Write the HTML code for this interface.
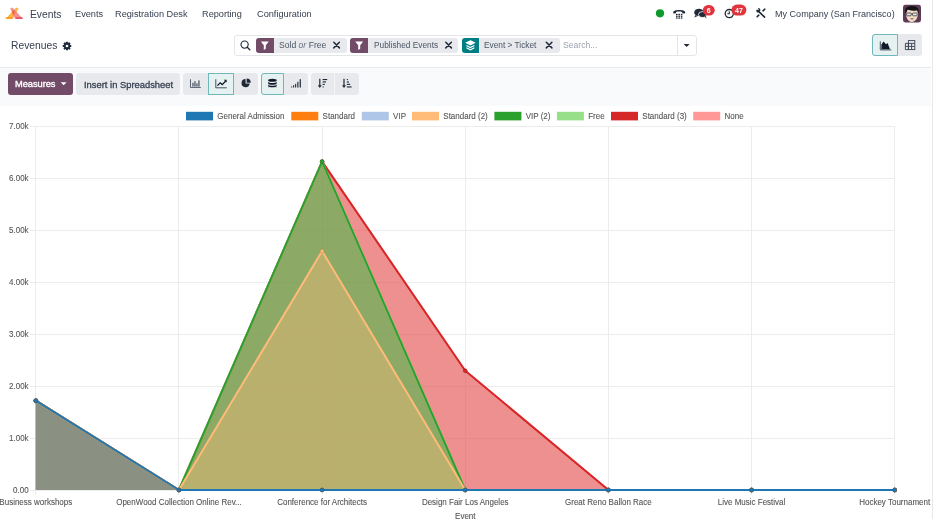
<!DOCTYPE html>
<html><head><meta charset="utf-8">
<style>
*{box-sizing:border-box;margin:0;padding:0}
html,body{width:933px;height:519px;overflow:hidden;background:#fff;font-family:"Liberation Sans",sans-serif;color:#374151}
.abs{position:absolute;will-change:transform}
.nav{font-size:9.2px;color:#374151;white-space:nowrap}
.band{position:absolute;left:0;top:66.7px;width:931px;height:39px;background:#f9fafb;border-top:1.2px solid #e9ebef}
.vline{position:absolute;left:932px;top:0;width:1px;height:519px;background:#e8e8e8}
.btn{position:absolute;border-radius:3px;background:#e7e9ed}
.act{background:#e6f1f2;border:1px solid #6fb7ba}
.facet{position:absolute;top:37.7px;height:14.8px;background:#e7e9ed;border-radius:3px;font-size:8.5px;white-space:nowrap}
.facet .ic{position:absolute;left:0;top:0;width:18px;height:14.8px;background:#714b67;border-radius:3px 0 0 3px}
.facet .tx{position:absolute;top:2.6px;color:#4b5563}
.facet .x{position:absolute;top:0}
</style></head><body>
<!-- NAVBAR -->
<svg class="abs" style="left:0;top:0" width="933" height="28" viewBox="0 0 933 28">
  <!-- logo -->
  <g>
    <polygon points="16.2,7.6 18.6,8.6 12.6,18.8 5.6,18.8" fill="#fbb03b" opacity="0.95"/>
    <polygon points="10.2,8.4 12.4,7.6 22.9,18.8 15.0,18.8" fill="#f47c7c" opacity="0.85"/>
    <polygon points="11.9,11.6 14.6,10.6 13.7,15.2" fill="#f15a24" opacity="0.9"/>
    <rect x="5.8" y="17.4" width="7" height="1.4" fill="#f7931e"/>
    <rect x="15.6" y="17.4" width="7" height="1.4" fill="#e0404e"/>
  </g>
</svg>
<div class="abs" style="left:29.5px;top:8.9px;font-size:10.3px;color:#374151">Events</div>
<div class="abs nav" style="left:74.5px;top:8.6px">Events</div>
<div class="abs nav" style="left:115px;top:8.6px">Registration Desk</div>
<div class="abs nav" style="left:201.5px;top:8.6px">Reporting</div>
<div class="abs nav" style="left:256.5px;top:8.6px">Configuration</div>

<svg class="abs" style="left:640px;top:0" width="293" height="28" viewBox="640 0 293 28">
  <circle cx="660" cy="13.3" r="4.1" fill="#0f9a2c"/>
  <!-- phone -->
  <path d="M673.2,12.2 c0,-3 12,-3 12,0 l-0.3,1.4 l-2.6,-0.4 l-0.2,-1.3 c-1.6,-0.6 -4.5,-0.6 -6,0 l-0.2,1.3 l-2.6,0.4 z" fill="#1f2937"/>
  <g fill="#1f2937">
    <rect x="676" y="13.8" width="1.6" height="1.3"/><rect x="678.4" y="13.8" width="1.6" height="1.3"/><rect x="680.8" y="13.8" width="1.6" height="1.3"/>
    <rect x="676" y="15.6" width="1.6" height="1.3"/><rect x="678.4" y="15.6" width="1.6" height="1.3"/><rect x="680.8" y="15.6" width="1.6" height="1.3"/>
    <rect x="676" y="17.4" width="1.6" height="1.3"/><rect x="678.4" y="17.4" width="1.6" height="1.3"/><rect x="680.8" y="17.4" width="1.6" height="1.3"/>
  </g>
  <!-- chat -->
  <ellipse cx="699" cy="12.4" rx="4.8" ry="3.6" fill="#1f2937"/>
  <path d="M695.5,15 l-1.2,2.6 l3.4,-1.6 z" fill="#1f2937"/>
  <ellipse cx="702.5" cy="14.6" rx="4" ry="3" fill="#1f2937" stroke="#fff" stroke-width="0.8"/>
  <path d="M704.8,16.8 l1.6,1.6 l-0.4,-2.6 z" fill="#1f2937"/>
  <rect x="702.8" y="4.9" width="11.9" height="10.7" rx="5.35" fill="#e0353d"/>
  <text x="708.75" y="12.9" font-size="7" font-weight="bold" fill="#fff" text-anchor="middle" font-family="Liberation Sans">6</text>
  <!-- clock -->
  <circle cx="729.3" cy="13.6" r="4.1" fill="none" stroke="#1f2937" stroke-width="1.3"/>
  <path d="M729.3,11.2 v2.6 h-2" fill="none" stroke="#1f2937" stroke-width="1.1"/>
  <rect x="731.4" y="4.5" width="15" height="11.1" rx="5.55" fill="#e0353d"/>
  <text x="738.9" y="12.7" font-size="7" font-weight="bold" fill="#fff" text-anchor="middle" font-family="Liberation Sans">47</text>
  <!-- tools -->
  <g stroke="#1f2937" stroke-width="1.6" stroke-linecap="round">
    <path d="M758.6,11.4 l6,5.8"/>
    <path d="M763,10.8 l1.8,-1.6"/>
    <path d="M757.2,16.6 l1.6,-1.4"/>
  </g>
  <path d="M756.2,10.2 l1,-0.8 l0.8,0.9 l0.8,-0.8 l-1,-1 l1,-0.4 c1.2,0.4 1.8,1.6 1.4,2.8 l-1.8,1.6 c-1.2,0.2 -2.2,-0.6 -2.2,-2.3 z" fill="#1f2937"/>
  <!-- avatar -->
  <rect x="903" y="4.8" width="18" height="17.6" rx="2.4" fill="#5e3a58"/>
  <path d="M906,12.6 c0,-1.6 0.6,-2.6 1.6,-3 c2.6,0.8 6.4,0.8 9,0 c0.8,0.6 1.4,1.6 1.4,3 c0.2,4.6 -2.2,9.4 -6.2,9.4 c-3.6,0 -6,-4.2 -5.8,-9.4 z" fill="#f3dcc6"/>
  <path d="M905.2,12.8 c-0.8,-4.8 2.2,-6.8 6.6,-6.8 c4.4,0 7.6,1.6 7,6.8 l-0.8,0.6 l-0.8,-3.2 c-2.6,0.8 -6.6,0.8 -9.6,-0.6 l-1.4,3.6 z" fill="#141414"/>
  <g fill="none" stroke="#3a3a3a" stroke-width="0.8">
    <rect x="906.6" y="13" width="4.6" height="2.8" rx="0.8" fill="#e6e6e6"/>
    <rect x="912.6" y="13" width="4.6" height="2.8" rx="0.8" fill="#e6e6e6"/>
    <path d="M911.2,14 h1.4"/>
    <path d="M910.6,18.8 h2.8"/>
  </g>
</svg>
<div class="abs nav" style="left:775px;top:8.8px;font-size:9.05px">My Company (San Francisco)</div>

<!-- CONTROL PANEL -->
<div class="abs" style="left:10.5px;top:40.2px;font-size:10.3px;color:#374151">Revenues</div>
<svg class="abs" style="left:62px;top:41px" width="10" height="10" viewBox="0 0 10 10">
  <g transform="translate(5,5)" fill="#1f2937">
    <circle r="3.1"/>
    <rect x="-1.1" y="-4.3" width="2.2" height="8.6" rx="0.5"/>
    <rect x="-1.1" y="-4.3" width="2.2" height="8.6" rx="0.5" transform="rotate(45)"/>
    <rect x="-1.1" y="-4.3" width="2.2" height="8.6" rx="0.5" transform="rotate(90)"/>
    <rect x="-1.1" y="-4.3" width="2.2" height="8.6" rx="0.5" transform="rotate(135)"/>
    <circle r="1.3" fill="#fff"/>
  </g>
</svg>

<div class="abs" style="left:233.5px;top:34.5px;width:463px;height:21.2px;border:1px solid #e3e5e9;border-radius:3px;background:#fff"></div>
<div class="abs" style="left:677px;top:35px;width:1px;height:20.4px;background:#e3e5e9"></div>
<svg class="abs" style="left:239px;top:39px" width="13" height="13" viewBox="0 0 13 13">
  <circle cx="5.6" cy="5.6" r="3.6" fill="none" stroke="#1f2937" stroke-width="1.15"/>
  <line x1="8.3" y1="8.3" x2="10.8" y2="10.8" stroke="#1f2937" stroke-width="1.3" stroke-linecap="round"/>
</svg>
<!-- facet 1 -->
<div class="abs" style="left:255.7px;top:37.5px;width:91px;height:15.2px;background:#e7e9ed;border-radius:3px"></div>
<div class="abs" style="left:255.7px;top:37.5px;width:18.2px;height:15.2px;background:#714b67;border-radius:3px 0 0 3px"></div>
<div class="abs" style="left:279.4px;top:40.3px;font-size:8.6px;color:#4b5563;white-space:nowrap">Sold <i style="color:#6b7280">or</i> Free</div>
<!-- facet 2 -->
<div class="abs" style="left:350.3px;top:37.5px;width:108.3px;height:15.2px;background:#e7e9ed;border-radius:3px"></div>
<div class="abs" style="left:350.3px;top:37.5px;width:17.8px;height:15.2px;background:#714b67;border-radius:3px 0 0 3px"></div>
<div class="abs" style="left:373.7px;top:40.3px;font-size:8.3px;color:#4b5563;white-space:nowrap">Published Events</div>
<!-- facet 3 -->
<div class="abs" style="left:462px;top:37.5px;width:97.8px;height:15.2px;background:#e7e9ed;border-radius:3px"></div>
<div class="abs" style="left:462px;top:37.5px;width:16.8px;height:15.2px;background:#017e84;border-radius:3px 0 0 3px"></div>
<div class="abs" style="left:484px;top:40.3px;font-size:8.3px;color:#4b5563;white-space:nowrap">Event &gt; Ticket</div>
<div class="abs" style="left:562.7px;top:40.3px;font-size:8.6px;color:#9ca3af;white-space:nowrap">Search...</div>
<svg class="abs" style="left:0;top:0" width="933" height="66" viewBox="0 0 933 66">
  <!-- funnel icons -->
  <path d="M260.8,41.6 h8 l-3,3.6 v3.6 l-2,1.2 v-4.8 z" fill="#fff"/>
  <path d="M355.2,41.6 h8 l-3,3.6 v3.6 l-2,1.2 v-4.8 z" fill="#fff"/>
  <!-- layers icon -->
  <g fill="none" stroke="#fff" stroke-width="1.1">
    <path d="M470.4,40.8 l4,2 l-4,2 l-4,-2 z" fill="#fff"/>
    <path d="M466.4,45.6 l4,2 l4,-2"/>
    <path d="M466.4,47.8 l4,2 l4,-2"/>
  </g>
  <!-- close x -->
  <g stroke="#1f2937" stroke-width="1.5" stroke-linecap="round">
    <path d="M333.8,42.3 l5.6,5.6 M339.4,42.3 l-5.6,5.6"/>
    <path d="M445.8,42.3 l5.6,5.6 M451.4,42.3 l-5.6,5.6"/>
    <path d="M546.3,42.3 l5.6,5.6 M551.9,42.3 l-5.6,5.6"/>
  </g>
  <!-- dropdown caret -->
  <path d="M683.6,44 h6 l-3,3 z" fill="#1f2937"/>
</svg>
<!-- view switcher -->
<div class="abs" style="left:872.2px;top:33.9px;width:49.7px;height:21.9px;background:#e7e9ed;border-radius:3px"></div>
<div class="abs" style="left:872.2px;top:33.9px;width:25.7px;height:21.9px;background:#e6f1f2;border:1px solid #6fb7ba;border-radius:3px 0 0 3px"></div>
<svg class="abs" style="left:0;top:0" width="933" height="66" viewBox="0 0 933 66">
  <path d="M880.3,41.3 v8.6 h11" fill="none" stroke="#374151" stroke-width="0.9"/>
  <path d="M881.4,49.2 v-4.6 l2.2,-3 l2.4,2.6 l1.6,-1.2 l2.4,6.2 z" fill="#111827"/>
  <g fill="none" stroke="#374151" stroke-width="0.9">
    <rect x="908.4" y="40.6" width="6.4" height="9"/>
    <path d="M908.4,43.4 h6.4 M908.4,46.4 h6.4 M911.6,43.4 v6.2 M905.4,43.4 h3 v6.2 h-3 z M905.4,46.4 h3"/>
  </g>
</svg>

<div class="band"></div>
<div class="vline"></div>
<!-- TOOLBAR -->
<div class="abs" style="left:7.8px;top:72.8px;width:65.2px;height:21.8px;background:#714b67;border-radius:3px"></div>
<div class="abs" style="left:15.3px;top:78.7px;font-size:9.3px;-webkit-text-stroke:0.35px #fff;color:#fff;white-space:nowrap;letter-spacing:-0.05px">Measures</div>
<div class="abs" style="left:76.2px;top:72.8px;width:104px;height:21.8px;background:#e7e9ed;border-radius:3px"></div>
<div class="abs" style="left:83.5px;top:78.6px;font-size:9.4px;-webkit-text-stroke:0.3px #374151;color:#374151;white-space:nowrap">Insert in Spreadsheet</div>
<div class="abs" style="left:183.4px;top:72.6px;width:74.5px;height:21.8px;background:#e7e9ed;border-radius:3px"></div>
<div class="abs" style="left:208px;top:72.6px;width:25.8px;height:21.8px;background:#e6f1f2;border:1px solid #6fb7ba"></div>
<div class="abs" style="left:261.1px;top:72.5px;width:46.7px;height:22px;background:#e7e9ed;border-radius:3px"></div>
<div class="abs" style="left:261.1px;top:72.5px;width:22.8px;height:22px;background:#e6f1f2;border:1px solid #6fb7ba;border-radius:3px 0 0 3px"></div>
<div class="abs" style="left:310.7px;top:72.5px;width:47.8px;height:22px;background:#e7e9ed;border-radius:3px"></div>
<div class="abs" style="left:334.4px;top:72.5px;width:0.8px;height:22px;background:#f3f4f6"></div>
<svg class="abs" style="left:0;top:60px" width="933" height="45" viewBox="0 60 933 45">
  <path d="M60.6,82.3 h6 l-3,3 z" fill="#fff"/>
  <!-- bar chart icon -->
  <g fill="#374151">
    <path d="M190.2,79.2 v8.6 h10.6 v-0.8 h-9.8 v-7.8 z"/>
    <rect x="192.4" y="82.8" width="1.1" height="3.8"/><rect x="194.4" y="81.2" width="1.1" height="5.4"/><rect x="196.4" y="83.4" width="1.1" height="3.2"/><rect x="198.4" y="80.4" width="1.1" height="6.2"/>
  </g>
  <!-- line icon -->
  <path d="M215.8,79.2 v8.6 h11" fill="none" stroke="#374151" stroke-width="0.9"/>
  <path d="M217.4,85.6 l2.8,-2.8 l2,1.8 l3.8,-3.8" fill="none" stroke="#111827" stroke-width="1.3"/>
  <path d="M226.6,79.8 v2.8 l-2.8,-2.8 z" fill="#111827"/>
  <!-- pie -->
  <path d="M245.6,79 a4.1,4.1 0 1,0 4.1,4.6 h-4.1 z" fill="#1f2937"/>
  <path d="M246.6,78.6 a4.1,4.1 0 0,1 4.1,4.1 h-4.1 z" fill="#1f2937"/>
  <!-- database -->
  <g fill="#111827">
    <ellipse cx="272.4" cy="80.2" rx="4.3" ry="1.5"/>
    <path d="M268.1,81.6 c0,2 8.6,2 8.6,0 v1.6 c0,2 -8.6,2 -8.6,0 z"/>
    <path d="M268.1,84.2 c0,2 8.6,2 8.6,0 v1.6 c0,2 -8.6,2 -8.6,0 z"/>
    <path d="M268.1,86.6 c0,2 8.6,2 8.6,0 v0.4 c0,1.4 -8.6,1.4 -8.6,0 z"/>
  </g>
  <!-- cumulative -->
  <g fill="#374151">
    <rect x="291" y="86.4" width="1.2" height="1.1"/><rect x="293" y="85.2" width="1.2" height="2.3"/><rect x="295" y="83.8" width="1.2" height="3.7"/><rect x="297.2" y="81.8" width="1.3" height="5.7"/><rect x="299.6" y="79.2" width="1.4" height="8.3"/>
  </g>
  <!-- sort desc -->
  <g fill="#1f2937">
    <rect x="319.2" y="78.8" width="1.2" height="7"/><path d="M317.8,85.2 h4 l-2,2.8 z"/>
    <rect x="322.6" y="79" width="4.6" height="1.1"/><rect x="322.6" y="81.4" width="3.4" height="1.1"/><rect x="322.6" y="83.8" width="2.2" height="1.1"/><rect x="322.6" y="86.4" width="1.1" height="1.1"/>
  </g>
  <!-- sort asc -->
  <g fill="#1f2937">
    <rect x="343.4" y="78.8" width="1.2" height="7"/><path d="M342,85.2 h4 l-2,2.8 z"/>
    <rect x="346.8" y="79" width="1.1" height="1.1"/><rect x="346.8" y="81.4" width="2.2" height="1.1"/><rect x="346.8" y="83.8" width="3.4" height="1.1"/><rect x="346.8" y="86.4" width="4.8" height="1.1"/>
  </g>
</svg>
<!-- CHART -->
<svg class="abs" style="left:0;top:0;will-change:transform" width="933" height="519" viewBox="0 0 933 519" id="chart">
<g font-family="Liberation Sans" font-size="8.8" fill="#555"><style>#chart text{stroke:#555;stroke-width:0.1px}</style><line x1="30" y1="490.5" x2="895.2" y2="490.5" stroke="#ececec" stroke-width="1"/>
<line x1="30" y1="438.5" x2="895.2" y2="438.5" stroke="#ececec" stroke-width="1"/>
<line x1="30" y1="386.5" x2="895.2" y2="386.5" stroke="#ececec" stroke-width="1"/>
<line x1="30" y1="334.5" x2="895.2" y2="334.5" stroke="#ececec" stroke-width="1"/>
<line x1="30" y1="282.5" x2="895.2" y2="282.5" stroke="#ececec" stroke-width="1"/>
<line x1="30" y1="230.5" x2="895.2" y2="230.5" stroke="#ececec" stroke-width="1"/>
<line x1="30" y1="178.5" x2="895.2" y2="178.5" stroke="#ececec" stroke-width="1"/>
<line x1="30" y1="126.5" x2="895.2" y2="126.5" stroke="#ececec" stroke-width="1"/>
<line x1="35.5" y1="126" x2="35.5" y2="495" stroke="#ececec" stroke-width="1"/>
<line x1="178.5" y1="126" x2="178.5" y2="495" stroke="#ececec" stroke-width="1"/>
<line x1="322.5" y1="126" x2="322.5" y2="495" stroke="#ececec" stroke-width="1"/>
<line x1="465.5" y1="126" x2="465.5" y2="495" stroke="#ececec" stroke-width="1"/>
<line x1="608.5" y1="126" x2="608.5" y2="495" stroke="#ececec" stroke-width="1"/>
<line x1="751.5" y1="126" x2="751.5" y2="495" stroke="#ececec" stroke-width="1"/>
<line x1="894.5" y1="126" x2="894.5" y2="495" stroke="#ececec" stroke-width="1"/>
<path d="M35.80,490.0 L35.80,400.68 178.95,490.00 322.10,161.60 465.25,370.70 608.40,490.00 751.55,490.00 894.70,490.00 L894.70,490.0 Z" fill="#ff9896" fill-opacity="0.4"/>
<path d="M35.80,490.0 L35.80,400.68 178.95,490.00 322.10,161.60 465.25,370.70 608.40,490.00 751.55,490.00 894.70,490.00 L894.70,490.0 Z" fill="#d62728" fill-opacity="0.4"/>
<path d="M35.80,490.0 L35.80,400.68 178.95,490.00 322.10,161.60 465.25,490.00 608.40,490.00 751.55,490.00 894.70,490.00 L894.70,490.0 Z" fill="#98df8a" fill-opacity="0.4"/>
<path d="M35.80,490.0 L35.80,400.68 178.95,490.00 322.10,161.60 465.25,490.00 608.40,490.00 751.55,490.00 894.70,490.00 L894.70,490.0 Z" fill="#2ca02c" fill-opacity="0.4"/>
<path d="M35.80,490.0 L35.80,400.68 178.95,490.00 322.10,251.10 465.25,490.00 608.40,490.00 751.55,490.00 894.70,490.00 L894.70,490.0 Z" fill="#ffbb78" fill-opacity="0.4"/>
<path d="M35.80,490.0 L35.80,400.68 178.95,490.00 322.10,490.00 465.25,490.00 608.40,490.00 751.55,490.00 894.70,490.00 L894.70,490.0 Z" fill="#aec7e8" fill-opacity="0.4"/>
<path d="M35.80,490.0 L35.80,400.68 178.95,490.00 322.10,490.00 465.25,490.00 608.40,490.00 751.55,490.00 894.70,490.00 L894.70,490.0 Z" fill="#ff7f0e" fill-opacity="0.4"/>
<path d="M35.80,490.0 L35.80,400.68 178.95,490.00 322.10,490.00 465.25,490.00 608.40,490.00 751.55,490.00 894.70,490.00 L894.70,490.0 Z" fill="#1f77b4" fill-opacity="0.4"/>
<polyline points="35.80,400.68 178.95,490.00 322.10,161.60 465.25,370.70 608.40,490.00 751.55,490.00 894.70,490.00" fill="none" stroke="#ff9896" stroke-width="2" stroke-linejoin="round"/>
<circle cx="35.80" cy="400.68" r="2" fill="#ff9896" stroke="rgba(0,0,0,0.2)" stroke-width="0.67"/>
<circle cx="178.95" cy="490.00" r="2" fill="#ff9896" stroke="rgba(0,0,0,0.2)" stroke-width="0.67"/>
<circle cx="322.10" cy="161.60" r="2" fill="#ff9896" stroke="rgba(0,0,0,0.2)" stroke-width="0.67"/>
<circle cx="465.25" cy="370.70" r="2" fill="#ff9896" stroke="rgba(0,0,0,0.2)" stroke-width="0.67"/>
<circle cx="608.40" cy="490.00" r="2" fill="#ff9896" stroke="rgba(0,0,0,0.2)" stroke-width="0.67"/>
<circle cx="751.55" cy="490.00" r="2" fill="#ff9896" stroke="rgba(0,0,0,0.2)" stroke-width="0.67"/>
<circle cx="894.70" cy="490.00" r="2" fill="#ff9896" stroke="rgba(0,0,0,0.2)" stroke-width="0.67"/>
<polyline points="35.80,400.68 178.95,490.00 322.10,161.60 465.25,370.70 608.40,490.00 751.55,490.00 894.70,490.00" fill="none" stroke="#d62728" stroke-width="2" stroke-linejoin="round"/>
<circle cx="35.80" cy="400.68" r="2" fill="#d62728" stroke="rgba(0,0,0,0.2)" stroke-width="0.67"/>
<circle cx="178.95" cy="490.00" r="2" fill="#d62728" stroke="rgba(0,0,0,0.2)" stroke-width="0.67"/>
<circle cx="322.10" cy="161.60" r="2" fill="#d62728" stroke="rgba(0,0,0,0.2)" stroke-width="0.67"/>
<circle cx="465.25" cy="370.70" r="2" fill="#d62728" stroke="rgba(0,0,0,0.2)" stroke-width="0.67"/>
<circle cx="608.40" cy="490.00" r="2" fill="#d62728" stroke="rgba(0,0,0,0.2)" stroke-width="0.67"/>
<circle cx="751.55" cy="490.00" r="2" fill="#d62728" stroke="rgba(0,0,0,0.2)" stroke-width="0.67"/>
<circle cx="894.70" cy="490.00" r="2" fill="#d62728" stroke="rgba(0,0,0,0.2)" stroke-width="0.67"/>
<polyline points="35.80,400.68 178.95,490.00 322.10,161.60 465.25,490.00 608.40,490.00 751.55,490.00 894.70,490.00" fill="none" stroke="#98df8a" stroke-width="2" stroke-linejoin="round"/>
<circle cx="35.80" cy="400.68" r="2" fill="#98df8a" stroke="rgba(0,0,0,0.2)" stroke-width="0.67"/>
<circle cx="178.95" cy="490.00" r="2" fill="#98df8a" stroke="rgba(0,0,0,0.2)" stroke-width="0.67"/>
<circle cx="322.10" cy="161.60" r="2" fill="#98df8a" stroke="rgba(0,0,0,0.2)" stroke-width="0.67"/>
<circle cx="465.25" cy="490.00" r="2" fill="#98df8a" stroke="rgba(0,0,0,0.2)" stroke-width="0.67"/>
<circle cx="608.40" cy="490.00" r="2" fill="#98df8a" stroke="rgba(0,0,0,0.2)" stroke-width="0.67"/>
<circle cx="751.55" cy="490.00" r="2" fill="#98df8a" stroke="rgba(0,0,0,0.2)" stroke-width="0.67"/>
<circle cx="894.70" cy="490.00" r="2" fill="#98df8a" stroke="rgba(0,0,0,0.2)" stroke-width="0.67"/>
<polyline points="35.80,400.68 178.95,490.00 322.10,161.60 465.25,490.00 608.40,490.00 751.55,490.00 894.70,490.00" fill="none" stroke="#2ca02c" stroke-width="2" stroke-linejoin="round"/>
<circle cx="35.80" cy="400.68" r="2" fill="#2ca02c" stroke="rgba(0,0,0,0.2)" stroke-width="0.67"/>
<circle cx="178.95" cy="490.00" r="2" fill="#2ca02c" stroke="rgba(0,0,0,0.2)" stroke-width="0.67"/>
<circle cx="322.10" cy="161.60" r="2" fill="#2ca02c" stroke="rgba(0,0,0,0.2)" stroke-width="0.67"/>
<circle cx="465.25" cy="490.00" r="2" fill="#2ca02c" stroke="rgba(0,0,0,0.2)" stroke-width="0.67"/>
<circle cx="608.40" cy="490.00" r="2" fill="#2ca02c" stroke="rgba(0,0,0,0.2)" stroke-width="0.67"/>
<circle cx="751.55" cy="490.00" r="2" fill="#2ca02c" stroke="rgba(0,0,0,0.2)" stroke-width="0.67"/>
<circle cx="894.70" cy="490.00" r="2" fill="#2ca02c" stroke="rgba(0,0,0,0.2)" stroke-width="0.67"/>
<polyline points="35.80,400.68 178.95,490.00 322.10,251.10 465.25,490.00 608.40,490.00 751.55,490.00 894.70,490.00" fill="none" stroke="#ffbb78" stroke-width="2" stroke-linejoin="round"/>
<circle cx="35.80" cy="400.68" r="2" fill="#ffbb78" stroke="rgba(0,0,0,0.2)" stroke-width="0.67"/>
<circle cx="178.95" cy="490.00" r="2" fill="#ffbb78" stroke="rgba(0,0,0,0.2)" stroke-width="0.67"/>
<circle cx="322.10" cy="251.10" r="2" fill="#ffbb78" stroke="rgba(0,0,0,0.2)" stroke-width="0.67"/>
<circle cx="465.25" cy="490.00" r="2" fill="#ffbb78" stroke="rgba(0,0,0,0.2)" stroke-width="0.67"/>
<circle cx="608.40" cy="490.00" r="2" fill="#ffbb78" stroke="rgba(0,0,0,0.2)" stroke-width="0.67"/>
<circle cx="751.55" cy="490.00" r="2" fill="#ffbb78" stroke="rgba(0,0,0,0.2)" stroke-width="0.67"/>
<circle cx="894.70" cy="490.00" r="2" fill="#ffbb78" stroke="rgba(0,0,0,0.2)" stroke-width="0.67"/>
<polyline points="35.80,400.68 178.95,490.00 322.10,490.00 465.25,490.00 608.40,490.00 751.55,490.00 894.70,490.00" fill="none" stroke="#aec7e8" stroke-width="2" stroke-linejoin="round"/>
<circle cx="35.80" cy="400.68" r="2" fill="#aec7e8" stroke="rgba(0,0,0,0.2)" stroke-width="0.67"/>
<circle cx="178.95" cy="490.00" r="2" fill="#aec7e8" stroke="rgba(0,0,0,0.2)" stroke-width="0.67"/>
<circle cx="322.10" cy="490.00" r="2" fill="#aec7e8" stroke="rgba(0,0,0,0.2)" stroke-width="0.67"/>
<circle cx="465.25" cy="490.00" r="2" fill="#aec7e8" stroke="rgba(0,0,0,0.2)" stroke-width="0.67"/>
<circle cx="608.40" cy="490.00" r="2" fill="#aec7e8" stroke="rgba(0,0,0,0.2)" stroke-width="0.67"/>
<circle cx="751.55" cy="490.00" r="2" fill="#aec7e8" stroke="rgba(0,0,0,0.2)" stroke-width="0.67"/>
<circle cx="894.70" cy="490.00" r="2" fill="#aec7e8" stroke="rgba(0,0,0,0.2)" stroke-width="0.67"/>
<polyline points="35.80,400.68 178.95,490.00 322.10,490.00 465.25,490.00 608.40,490.00 751.55,490.00 894.70,490.00" fill="none" stroke="#ff7f0e" stroke-width="2" stroke-linejoin="round"/>
<circle cx="35.80" cy="400.68" r="2" fill="#ff7f0e" stroke="rgba(0,0,0,0.2)" stroke-width="0.67"/>
<circle cx="178.95" cy="490.00" r="2" fill="#ff7f0e" stroke="rgba(0,0,0,0.2)" stroke-width="0.67"/>
<circle cx="322.10" cy="490.00" r="2" fill="#ff7f0e" stroke="rgba(0,0,0,0.2)" stroke-width="0.67"/>
<circle cx="465.25" cy="490.00" r="2" fill="#ff7f0e" stroke="rgba(0,0,0,0.2)" stroke-width="0.67"/>
<circle cx="608.40" cy="490.00" r="2" fill="#ff7f0e" stroke="rgba(0,0,0,0.2)" stroke-width="0.67"/>
<circle cx="751.55" cy="490.00" r="2" fill="#ff7f0e" stroke="rgba(0,0,0,0.2)" stroke-width="0.67"/>
<circle cx="894.70" cy="490.00" r="2" fill="#ff7f0e" stroke="rgba(0,0,0,0.2)" stroke-width="0.67"/>
<polyline points="35.80,400.68 178.95,490.00 322.10,490.00 465.25,490.00 608.40,490.00 751.55,490.00 894.70,490.00" fill="none" stroke="#1f77b4" stroke-width="2" stroke-linejoin="round"/>
<circle cx="35.80" cy="400.68" r="2" fill="#1f77b4" stroke="rgba(0,0,0,0.2)" stroke-width="0.67"/>
<circle cx="178.95" cy="490.00" r="2" fill="#1f77b4" stroke="rgba(0,0,0,0.2)" stroke-width="0.67"/>
<circle cx="322.10" cy="490.00" r="2" fill="#1f77b4" stroke="rgba(0,0,0,0.2)" stroke-width="0.67"/>
<circle cx="465.25" cy="490.00" r="2" fill="#1f77b4" stroke="rgba(0,0,0,0.2)" stroke-width="0.67"/>
<circle cx="608.40" cy="490.00" r="2" fill="#1f77b4" stroke="rgba(0,0,0,0.2)" stroke-width="0.67"/>
<circle cx="751.55" cy="490.00" r="2" fill="#1f77b4" stroke="rgba(0,0,0,0.2)" stroke-width="0.67"/>
<circle cx="894.70" cy="490.00" r="2" fill="#1f77b4" stroke="rgba(0,0,0,0.2)" stroke-width="0.67"/>
<text x="28.60" y="492.50" text-anchor="end" textLength="15.58" lengthAdjust="spacingAndGlyphs">0.00</text>
<text x="28.60" y="440.57" text-anchor="end" textLength="19.58" lengthAdjust="spacingAndGlyphs">1.00k</text>
<text x="28.60" y="388.64" text-anchor="end" textLength="19.58" lengthAdjust="spacingAndGlyphs">2.00k</text>
<text x="28.60" y="336.71" text-anchor="end" textLength="19.58" lengthAdjust="spacingAndGlyphs">3.00k</text>
<text x="28.60" y="284.78" text-anchor="end" textLength="19.58" lengthAdjust="spacingAndGlyphs">4.00k</text>
<text x="28.60" y="232.85" text-anchor="end" textLength="19.58" lengthAdjust="spacingAndGlyphs">5.00k</text>
<text x="28.60" y="180.92" text-anchor="end" textLength="19.58" lengthAdjust="spacingAndGlyphs">6.00k</text>
<text x="28.60" y="128.99" text-anchor="end" textLength="19.58" lengthAdjust="spacingAndGlyphs">7.00k</text>
<text x="35.80" y="505.00" text-anchor="middle" textLength="72.92" lengthAdjust="spacingAndGlyphs">Business workshops</text>
<text x="178.95" y="505.00" text-anchor="middle" textLength="125.55" lengthAdjust="spacingAndGlyphs">OpenWood Collection Online Rev...</text>
<text x="322.10" y="505.00" text-anchor="middle" textLength="89.83" lengthAdjust="spacingAndGlyphs">Conference for Architects</text>
<text x="465.25" y="505.00" text-anchor="middle" textLength="86.72" lengthAdjust="spacingAndGlyphs">Design Fair Los Angeles</text>
<text x="608.40" y="505.00" text-anchor="middle" textLength="86.72" lengthAdjust="spacingAndGlyphs">Great Reno Ballon Race</text>
<text x="751.55" y="505.00" text-anchor="middle" textLength="67.58" lengthAdjust="spacingAndGlyphs">Live Music Festival</text>
<text x="894.70" y="505.00" text-anchor="middle" textLength="71.00" lengthAdjust="spacingAndGlyphs">Hockey Tournament</text>
<text x="465.30" y="519.40" text-anchor="middle" textLength="20.47" lengthAdjust="spacingAndGlyphs">Event</text>
<rect x="186" y="111.8" width="27" height="8.6" fill="#1f77b4"/>
<text x="217.30" y="118.80" text-anchor="start" textLength="67.16" lengthAdjust="spacingAndGlyphs">General Admission</text>
<rect x="291.3" y="111.8" width="27" height="8.6" fill="#ff7f0e"/>
<text x="322.60" y="118.80" text-anchor="start" textLength="32.47" lengthAdjust="spacingAndGlyphs">Standard</text>
<rect x="361.8" y="111.8" width="27" height="8.6" fill="#aec7e8"/>
<text x="393.10" y="118.80" text-anchor="start" textLength="12.91" lengthAdjust="spacingAndGlyphs">VIP</text>
<rect x="412" y="111.8" width="27" height="8.6" fill="#ffbb78"/>
<text x="443.30" y="118.80" text-anchor="start" textLength="44.47" lengthAdjust="spacingAndGlyphs">Standard (2)</text>
<rect x="494.4" y="111.8" width="27" height="8.6" fill="#2ca02c"/>
<text x="525.70" y="118.80" text-anchor="start" textLength="24.75" lengthAdjust="spacingAndGlyphs">VIP (2)</text>
<rect x="556.9" y="111.8" width="27" height="8.6" fill="#98df8a"/>
<text x="588.20" y="118.80" text-anchor="start" textLength="16.45" lengthAdjust="spacingAndGlyphs">Free</text>
<rect x="611" y="111.8" width="27" height="8.6" fill="#d62728"/>
<text x="642.30" y="118.80" text-anchor="start" textLength="44.47" lengthAdjust="spacingAndGlyphs">Standard (3)</text>
<rect x="693.2" y="111.8" width="27" height="8.6" fill="#ff9896"/>
<text x="724.50" y="118.80" text-anchor="start" textLength="19.12" lengthAdjust="spacingAndGlyphs">None</text></g>
</svg>
</body></html>
